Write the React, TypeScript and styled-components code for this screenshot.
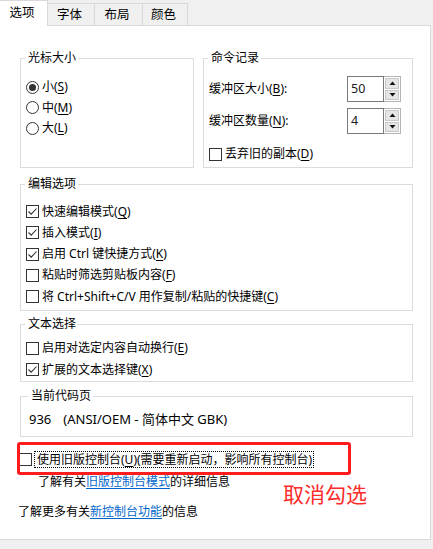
import React from 'react';
import styled, { createGlobalStyle } from 'styled-components';

const GlobalStyle = createGlobalStyle`
  html, body {
    margin: 0;
    padding: 0;
    background: #f0f0f0;
  }
  body {
    font-family: "Noto Sans", "Noto Sans CJK SC", sans-serif;
    font-size: 12px;
    color: #000;
  }
`;

const Window = styled.div`
  width: 433px;
  height: 549px;
  overflow: hidden;
  background: #f0f0f0;
`;

const TabStrip = styled.div`
  position: relative;
  z-index: 1;
  display: flex;
  align-items: flex-end;
  height: 25px;
`;

const Tab = styled.div<{ $active?: boolean; $width: number }>`
  box-sizing: border-box;
  width: ${({ $width }) => $width}px;
  height: ${({ $active }) => ($active ? 26 : 22)}px;
  margin-bottom: ${({ $active }) => ($active ? -1 : 0)}px;
  margin-left: ${({ $active }) => ($active ? 0 : -1)}px;
  border: 1px solid #d9d9d9;
  border-bottom: none;
  border-left: ${({ $active }) => ($active ? 'none' : '1px solid #d9d9d9')};
  background: ${({ $active }) => ($active ? '#fff' : '#f0f0f0')};
  display: flex;
  align-items: center;
  justify-content: center;
  padding-bottom: ${({ $active }) => ($active ? 2 : 0)}px;
  padding-right: 3px;
  line-height: 16px;
  font-size: 12.5px;
`;

const Panel = styled.div`
  box-sizing: border-box;
  width: 431px;
  height: 515px;
  background: #fff;
  border: 1px solid #d9d9d9;
  border-left: none;
  padding: 24px 17px 0 20px;
  display: flex;
  flex-direction: column;
`;

const TopRow = styled.div`
  display: flex;
  gap: 9px;
`;

const Group = styled.fieldset<{ $width?: number; $pt: number; $pb: number; $pl?: number; $mt?: number }>`
  box-sizing: border-box;
  margin: ${({ $mt = 0 }) => $mt}px 0 0 0;
  min-width: 0;
  ${({ $width }) => ($width ? `width: ${$width}px; flex: none;` : '')}
  border: 1px solid #dcdcdc;
  padding: ${({ $pt }) => $pt}px 6px ${({ $pb }) => $pb}px ${({ $pl = 5 }) => $pl}px;
`;

const GroupTitle = styled.legend`
  margin-left: -1px;
  padding: 0 2px 0 3px;
  line-height: 16px;
  font-size: 12px;
`;

const Rows = styled.div<{ $row: number }>`
  display: flex;
  flex-direction: column;
  & > * {
    height: ${({ $row }) => $row}px;
  }
`;

const OptionRow = styled.label`
  display: flex;
  align-items: center;
  gap: 3px;
  line-height: 16px;
  white-space: nowrap;
`;

const Key = styled.span`
  text-decoration: underline;
  text-underline-offset: 2px;
`;

const RadioCircle = styled.span<{ $checked?: boolean }>`
  box-sizing: border-box;
  width: 13px;
  height: 13px;
  border: 1px solid #333;
  border-radius: 50%;
  background: #fff;
  display: flex;
  align-items: center;
  justify-content: center;
  flex: none;
  &::after {
    content: '';
    width: 7px;
    height: 7px;
    border-radius: 50%;
    background: ${({ $checked }) => ($checked ? '#333' : 'transparent')};
  }
`;

const CheckBoxBox = styled.span`
  box-sizing: border-box;
  width: 13px;
  height: 13px;
  border: 1px solid #333;
  background: #fff;
  display: flex;
  align-items: center;
  justify-content: center;
  flex: none;
`;

const Check: React.FC<{ checked?: boolean }> = ({ checked }) => (
  <CheckBoxBox>
    {checked && (
      <svg width="11" height="11" viewBox="0 0 11 11">
        <path d="M1.5 5.5 L4.2 8.2 L9.5 2.5" fill="none" stroke="#333" strokeWidth="1.1" />
      </svg>
    )}
  </CheckBoxBox>
);

const HistoryBody = styled.div`
  display: flex;
  flex-direction: column;
  padding-top: 10px;
  padding-bottom: 3px;
`;

const SpinRow = styled.div<{ $mt?: number }>`
  display: flex;
  align-items: center;
  justify-content: space-between;
  height: 26px;
  margin-top: ${({ $mt = 0 }) => $mt}px;
  padding-right: 5px;
  line-height: 16px;
  white-space: nowrap;
`;

const SpinBox = styled.div`
  display: flex;
  height: 26px;
`;

const SpinField = styled.div`
  box-sizing: border-box;
  width: 37px;
  height: 26px;
  border: 1px solid #7a7a7a;
  padding-left: 3px;
  display: flex;
  align-items: center;
  font-size: 12.5px;
  color: #1a1a1a;
`;

const SpinButtons = styled.div`
  box-sizing: border-box;
  width: 17px;
  height: 26px;
  border: 1px solid #b4b4b4;
  border-left: none;
  display: flex;
  flex-direction: column;
  padding: 1px;
  gap: 1px;
  background: #fff;
`;

const SpinButton = styled.div`
  flex: 1;
  background: #e5e5e5;
  border: 1px solid #c8c8c8;
  display: flex;
  align-items: center;
  justify-content: center;
`;

const Arrow: React.FC<{ up?: boolean }> = ({ up }) => (
  <svg width="7" height="4" viewBox="0 0 7 4">
    <path d={up ? 'M0.5 4 L3.5 0.5 L6.5 4 Z' : 'M0.5 0 L3.5 3.5 L6.5 0 Z'} fill="#111" />
  </svg>
);

const Spinner: React.FC<{ value: string }> = ({ value }) => (
  <SpinBox>
    <SpinField>{value}</SpinField>
    <SpinButtons>
      <SpinButton>
        <Arrow up />
      </SpinButton>
      <SpinButton>
        <Arrow />
      </SpinButton>
    </SpinButtons>
  </SpinBox>
);

const DiscardRow = styled(OptionRow)`
  height: 20px;
  margin-top: 10px;
`;

const CodePageLine = styled.div`
  display: flex;
  gap: 12px;
  line-height: 16px;
  font-size: 13px;
`;

const LegacyBlock = styled.div`
  position: relative;
  margin-top: 14px;
  margin-left: -1px;
  display: flex;
  align-items: center;
  gap: 2px;
  height: 17px;
  white-space: nowrap;
`;

const FocusText = styled.span`
  border: 1px dotted #000;
  padding: 0 1px 0 2px;
  line-height: 15px;
`;

const Annotation = styled.div`
  position: absolute;
  left: -2px;
  top: -9px;
  width: 334px;
  height: 33px;
  box-sizing: border-box;
  border: 3.5px solid #ff1c1c;
  border-radius: 3px;
  pointer-events: none;
`;

const AnnotationText = styled.div`
  position: absolute;
  left: 264px;
  top: 28px;
  font-family: "Noto Sans CJK SC", sans-serif;
  font-size: 21px;
  line-height: 28px;
  color: #ff2a2a;
  white-space: nowrap;
`;

const InfoLine = styled.div<{ $mt: number; $ml: number }>`
  margin-top: ${({ $mt }) => $mt}px;
  margin-left: ${({ $ml }) => $ml}px;
  line-height: 17px;
  white-space: nowrap;
`;

const Link = styled.a`
  color: #0066cc;
  text-decoration: underline;
  text-underline-offset: 2px;
`;

const tabs = [
  { label: '选项', width: 48 },
  { label: '字体', width: 48 },
  { label: '布局', width: 49 },
  { label: '颜色', width: 46 },
];

const editOptions = [
  { text: '快速编辑模式', key: 'Q', checked: true },
  { text: '插入模式', key: 'I', checked: true },
  { text: '启用 Ctrl 键快捷方式', key: 'K', checked: true },
  { text: '粘贴时筛选剪贴板内容', key: 'F', checked: false },
  { text: '将 Ctrl+Shift+C/V 用作复制/粘贴的快捷键', key: 'C', checked: false },
];

export default function App() {
  return (
    <>
      <GlobalStyle />
      <Window>
        <TabStrip>
          {tabs.map((tab, i) => (
            <Tab key={tab.label} $active={i === 0} $width={tab.width}>
              {tab.label}
            </Tab>
          ))}
        </TabStrip>
        <Panel>
          <TopRow>
            <Group $width={174} $pt={11} $pb={3} $pl={5}>
              <GroupTitle>光标大小</GroupTitle>
              <Rows $row={20.5}>
                <OptionRow>
                  <RadioCircle $checked />
                  <span>
                    小(<Key>S</Key>)
                  </span>
                </OptionRow>
                <OptionRow>
                  <RadioCircle />
                  <span>
                    中(<Key>M</Key>)
                  </span>
                </OptionRow>
                <OptionRow>
                  <RadioCircle />
                  <span>
                    大(<Key>L</Key>)
                  </span>
                </OptionRow>
              </Rows>
            </Group>
            <Group $width={210} $pt={0} $pb={0} $pl={5}>
              <GroupTitle>命令记录</GroupTitle>
              <HistoryBody>
                <SpinRow>
                  <span>
                    缓冲区大小(<Key>B</Key>):
                  </span>
                  <Spinner value="50" />
                </SpinRow>
                <SpinRow $mt={6}>
                  <span>
                    缓冲区数量(<Key>N</Key>):
                  </span>
                  <Spinner value="4" />
                </SpinRow>
                <DiscardRow>
                  <Check />
                  <span>
                    丢弃旧的副本(<Key>D</Key>)
                  </span>
                </DiscardRow>
              </HistoryBody>
            </Group>
          </TopRow>

          <Group $mt={8} $pt={9} $pb={3}>
            <GroupTitle>编辑选项</GroupTitle>
            <Rows $row={21.25}>
              {editOptions.map((opt) => (
                <OptionRow key={opt.key}>
                  <Check checked={opt.checked} />
                  <span>
                    {opt.text}(<Key>{opt.key}</Key>)
                  </span>
                </OptionRow>
              ))}
            </Rows>
          </Group>

          <Group $mt={5} $pt={5} $pb={1}>
            <GroupTitle>文本选择</GroupTitle>
            <Rows $row={21.5}>
              <OptionRow>
                <Check />
                <span>
                  启用对选定内容自动换行(<Key>E</Key>)
                </span>
              </OptionRow>
              <OptionRow>
                <Check checked />
                <span>
                  扩展的文本选择键(<Key>X</Key>)
                </span>
              </OptionRow>
            </Rows>
          </Group>

          <Group $mt={6} $pt={7} $pb={9} $pl={8}>
            <GroupTitle>当前代码页</GroupTitle>
            <CodePageLine>
              <span>936</span>
              <span>(ANSI/OEM - 简体中文 GBK)</span>
            </CodePageLine>
          </Group>

          <LegacyBlock>
            <Check />
            <FocusText>
              使用旧版控制台(<Key>U</Key>)(需要重新启动，影响所有控制台)
            </FocusText>
            <Annotation />
            <AnnotationText>取消勾选</AnnotationText>
          </LegacyBlock>
          <InfoLine $mt={5} $ml={18}>
            了解有关<Link>旧版控制台模式</Link>的详细信息
          </InfoLine>
          <InfoLine $mt={13} $ml={-2}>
            了解更多有关<Link>新控制台功能</Link>的信息
          </InfoLine>
        </Panel>
      </Window>
    </>
  );
}
